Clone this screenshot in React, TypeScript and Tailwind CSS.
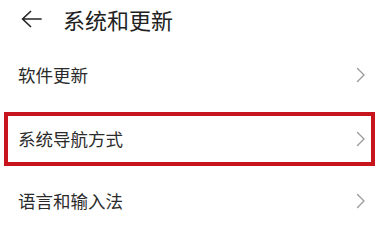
const Chevron = () => (
  <svg width="10" height="16" viewBox="0 0 10 16" fill="none">
    <path d="M1.5 1.5 L8 8 L1.5 14.5" stroke="#999999" strokeWidth="1.3" strokeLinecap="round" strokeLinejoin="round" />
  </svg>
);

const Row = ({ label, boxed }: { label: string; boxed?: boolean }) => (
  <div
    className={
      boxed
        ? 'h-full flex items-center justify-between pl-[10px] pr-[5px]'
        : 'h-[62px] shrink-0 flex items-center justify-between pl-[18px] pr-[14px]'
    }
  >
    <span className="text-[17.5px] text-[#2b2b2b] leading-none">{label}</span>
    <Chevron />
  </div>
);

export default function App() {
  return (
    <div
      className="w-[380px] h-[223px] overflow-hidden bg-white flex flex-col"
      style={{ fontFamily: '"Noto Sans CJK SC", "Noto Sans", sans-serif' }}
    >
      <div className="h-[38px] shrink-0 flex items-center pl-[21px] gap-[21px]">
        <svg width="21" height="18" viewBox="0 0 21 18" fill="none">
          <path d="M1.5 9 H20 M9.5 1.5 L1.5 9 L9.5 16.5" stroke="#262626" strokeWidth="1.7" strokeLinecap="round" strokeLinejoin="round" />
        </svg>
        <span className="text-[22px] text-[#222222] leading-none">系统和更新</span>
      </div>
      <div className="h-[6px] shrink-0" />
      <Row label="软件更新" />
      <div className="mt-[6px] ml-[4px] mr-[5px] h-[54px] shrink-0 border-4 border-[#c8141c]">
        <Row label="系统导航方式" boxed />
      </div>
      <div className="mt-[4px] shrink-0">
        <Row label="语言和输入法" />
      </div>
    </div>
  );
}
